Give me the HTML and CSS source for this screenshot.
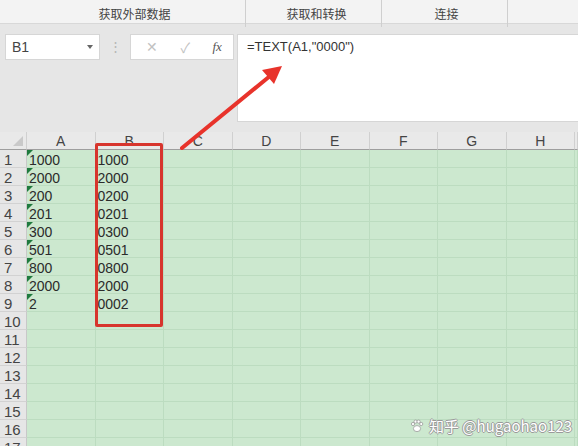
FILE: index.html
```html
<!DOCTYPE html>
<html lang="zh-CN">
<head>
  <meta charset="UTF-8" />
  <title>TEXT 函数补零</title>
  <link rel="stylesheet" href="styles.css">
</head>
<body>
  <div class="ribbon">
    <div class="ribbon-group g-external">获取外部数据</div>
    <div class="ribbon-group g-transform">获取和转换</div>
    <div class="ribbon-group g-connect">连接</div>
    <div class="ribbon-rest"></div>
  </div>

  <!-- name box + formula bar -->
  <div class="formula-area">
    <div class="name-box">
      <span>B1</span>
      <span class="caret"></span>
    </div>
    <div class="grip">⋮</div>
    <div class="fx-box">
      <span class="fx-btn">✕</span>
      <span class="fx-btn">✓</span>
      <span class="fx-btn fx">fx</span>
    </div>
    <div class="formula-bar">=TEXT(A1,"0000")</div>
  </div>

  <div class="sheet" id="sheet"></div>

  <!-- callouts drawn over the sheet -->
  <div class="highlight"></div>
  <svg class="arrow" viewBox="0 0 578 446" width="578" height="446">
    <line x1="182" y1="148" x2="270" y2="76" stroke="#e8332b" stroke-width="4" stroke-linecap="round"/>
    <polygon points="282,66 274,84 262,70" fill="#e8332b"/>
  </svg>

  <div class="watermark">
    <svg width="14" height="14" viewBox="0 0 14 14">
      <circle cx="3" cy="5" r="1.6"/>
      <circle cx="5.6" cy="2.6" r="1.6"/>
      <circle cx="8.6" cy="2.6" r="1.6"/>
      <circle cx="11.2" cy="5" r="1.6"/>
      <ellipse cx="7" cy="9.6" rx="3.6" ry="3"/>
    </svg>
    <span>知乎 @hugaohao123</span>
  </div>

  <script>
    const cols = ["A", "B", "C", "D", "E", "F", "G", "H", ""];
    const colA = ["1000", "2000", "200", "201", "300", "501", "800", "2000", "2"];
    const colB = ["1000", "2000", "0200", "0201", "0300", "0501", "0800", "2000", "0002"];
    const sheet = document.getElementById("sheet");

    function cell(cls, text) {
      const d = document.createElement("div");
      d.className = cls;
      d.textContent = text || "";
      sheet.appendChild(d);
    }

    cell("corner");
    cols.forEach(c => cell("col-head", c));

    for (let r = 1; r <= 17; r++) {
      cell("row-head", r);
      cols.forEach((c, i) => {
        if (i === 0 && colA[r - 1]) cell("cell text-num", colA[r - 1]);
        else if (i === 1 && colB[r - 1]) cell("cell", colB[r - 1]);
        else cell("cell");
      });
    }
  </script>
</body>
</html>
```

FILE: styles.css
```css
body {
  margin: 0;
  width: 578px;
  height: 446px;
  overflow: hidden;
  background: #e6e6e6;
  font-family: "Liberation Sans", "Noto Sans CJK SC", Arial, sans-serif;
  position: relative;
}

/* ribbon group labels */
.ribbon {
  display: grid;
  grid-template-columns: 246px 136px 126px 1fr;
  height: 23px;
  background: #f3f3f3;
  border-bottom: 1px solid #d8d8d8;
}

.ribbon-group {
  font-family: "Noto Sans CJK SC", sans-serif;
  font-size: 12px;
  color: #444;
  text-align: center;
  line-height: 27px;
  border-right: 1px solid #cfcfcf;
  margin: 0 0 4px;
  padding-left: 20px;
}

.g-external { padding-left: 24px; }
.g-transform { padding-left: 6px; }
.g-connect { padding-left: 4px; }

/* name box / formula bar */
.formula-area {
  display: flex;
  align-items: flex-start;
  height: 108px;
  padding: 10px 0 0 5px;
  box-sizing: border-box;
}

.name-box {
  width: 95px;
  height: 26px;
  box-sizing: border-box;
  background: #fff;
  border: 1px solid #d6d6d6;
  display: flex;
  align-items: center;
  justify-content: space-between;
  padding: 0 6px 0 6px;
  font-size: 14px;
  color: #444;
}

.caret {
  width: 0;
  height: 0;
  border-left: 3px solid transparent;
  border-right: 3px solid transparent;
  border-top: 4px solid #666;
}

.grip {
  width: 30px;
  text-align: center;
  color: #b5b5b5;
  font-size: 13px;
  line-height: 26px;
}

.fx-box {
  width: 104px;
  height: 26px;
  box-sizing: border-box;
  background: #fff;
  border: 1px solid #d6d6d6;
  display: flex;
  align-items: center;
  justify-content: space-around;
  padding-left: 4px;
}

.fx-btn {
  color: #c2c2c2;
  font-size: 14px;
}

.fx {
  color: #555;
  font-family: "Liberation Serif", serif;
  font-style: italic;
  font-size: 13px;
}

.formula-bar {
  margin-left: 3px;
  flex: 1;
  height: 88px;
  box-sizing: border-box;
  background: #fff;
  border: 1px solid #d6d6d6;
  border-right: none;
  padding: 4px 0 0 9px;
  font-size: 13px;
  color: #333;
}

/* worksheet grid */
.sheet {
  display: grid;
  grid-template-columns: 27px repeat(8, 68.5px) 1fr;
  grid-auto-rows: 18px;
}

.corner,
.col-head {
  height: 18px;
  box-sizing: border-box;
  background: #e9e9e9;
  border-bottom: 1px solid #9e9e9e;
}

.corner {
  position: relative;
  border-right: 1px solid #d0d0d0;
}

.corner::after {
  content: "";
  position: absolute;
  right: 3px;
  bottom: 3px;
  border-left: 10px solid transparent;
  border-bottom: 10px solid #c9c9c9;
}

.col-head {
  border-right: 1px solid #d0d0d0;
  text-align: center;
  font-size: 14px;
  line-height: 19px;
  color: #444;
}

.row-head {
  background: #e6e6e6;
  border-right: 1px solid #c8c8c8;
  border-bottom: 1px solid #d2d2d2;
  box-sizing: border-box;
  font-size: 15px;
  color: #444;
  padding-left: 4px;
  line-height: 20px;
}

.cell {
  background: #cce8cf;
  border-right: 1px solid #bcdcc0;
  border-bottom: 1px solid #bcdcc0;
  box-sizing: border-box;
  font-size: 14px;
  line-height: 20px;
  color: #2b2b2b;
  padding-left: 2px;
  position: relative;
}

/* number stored as text marker */
.text-num::before {
  content: "";
  position: absolute;
  left: 0;
  top: 0;
  border-top: 6px solid #1f7a3e;
  border-right: 6px solid transparent;
}

.highlight {
  position: absolute;
  left: 95px;
  top: 143px;
  width: 68px;
  height: 184px;
  box-sizing: border-box;
  border: 3px solid #d7352d;
  border-radius: 2px;
}

.arrow {
  position: absolute;
  left: 0;
  top: 0;
  pointer-events: none;
}

.watermark {
  position: absolute;
  left: 410px;
  top: 415px;
  display: flex;
  align-items: center;
  gap: 5px;
  white-space: nowrap;
  font-family: "Noto Sans CJK SC", sans-serif;
  font-size: 15px;
  color: #fff;
  text-shadow: -1px 0 #9a9a9a, 1px 0 #9a9a9a, 0 -1px #9a9a9a, 0 1px #9a9a9a;
}

.watermark svg {
  fill: #fff;
  stroke: #9a9a9a;
  stroke-width: 0.8;
}
```
